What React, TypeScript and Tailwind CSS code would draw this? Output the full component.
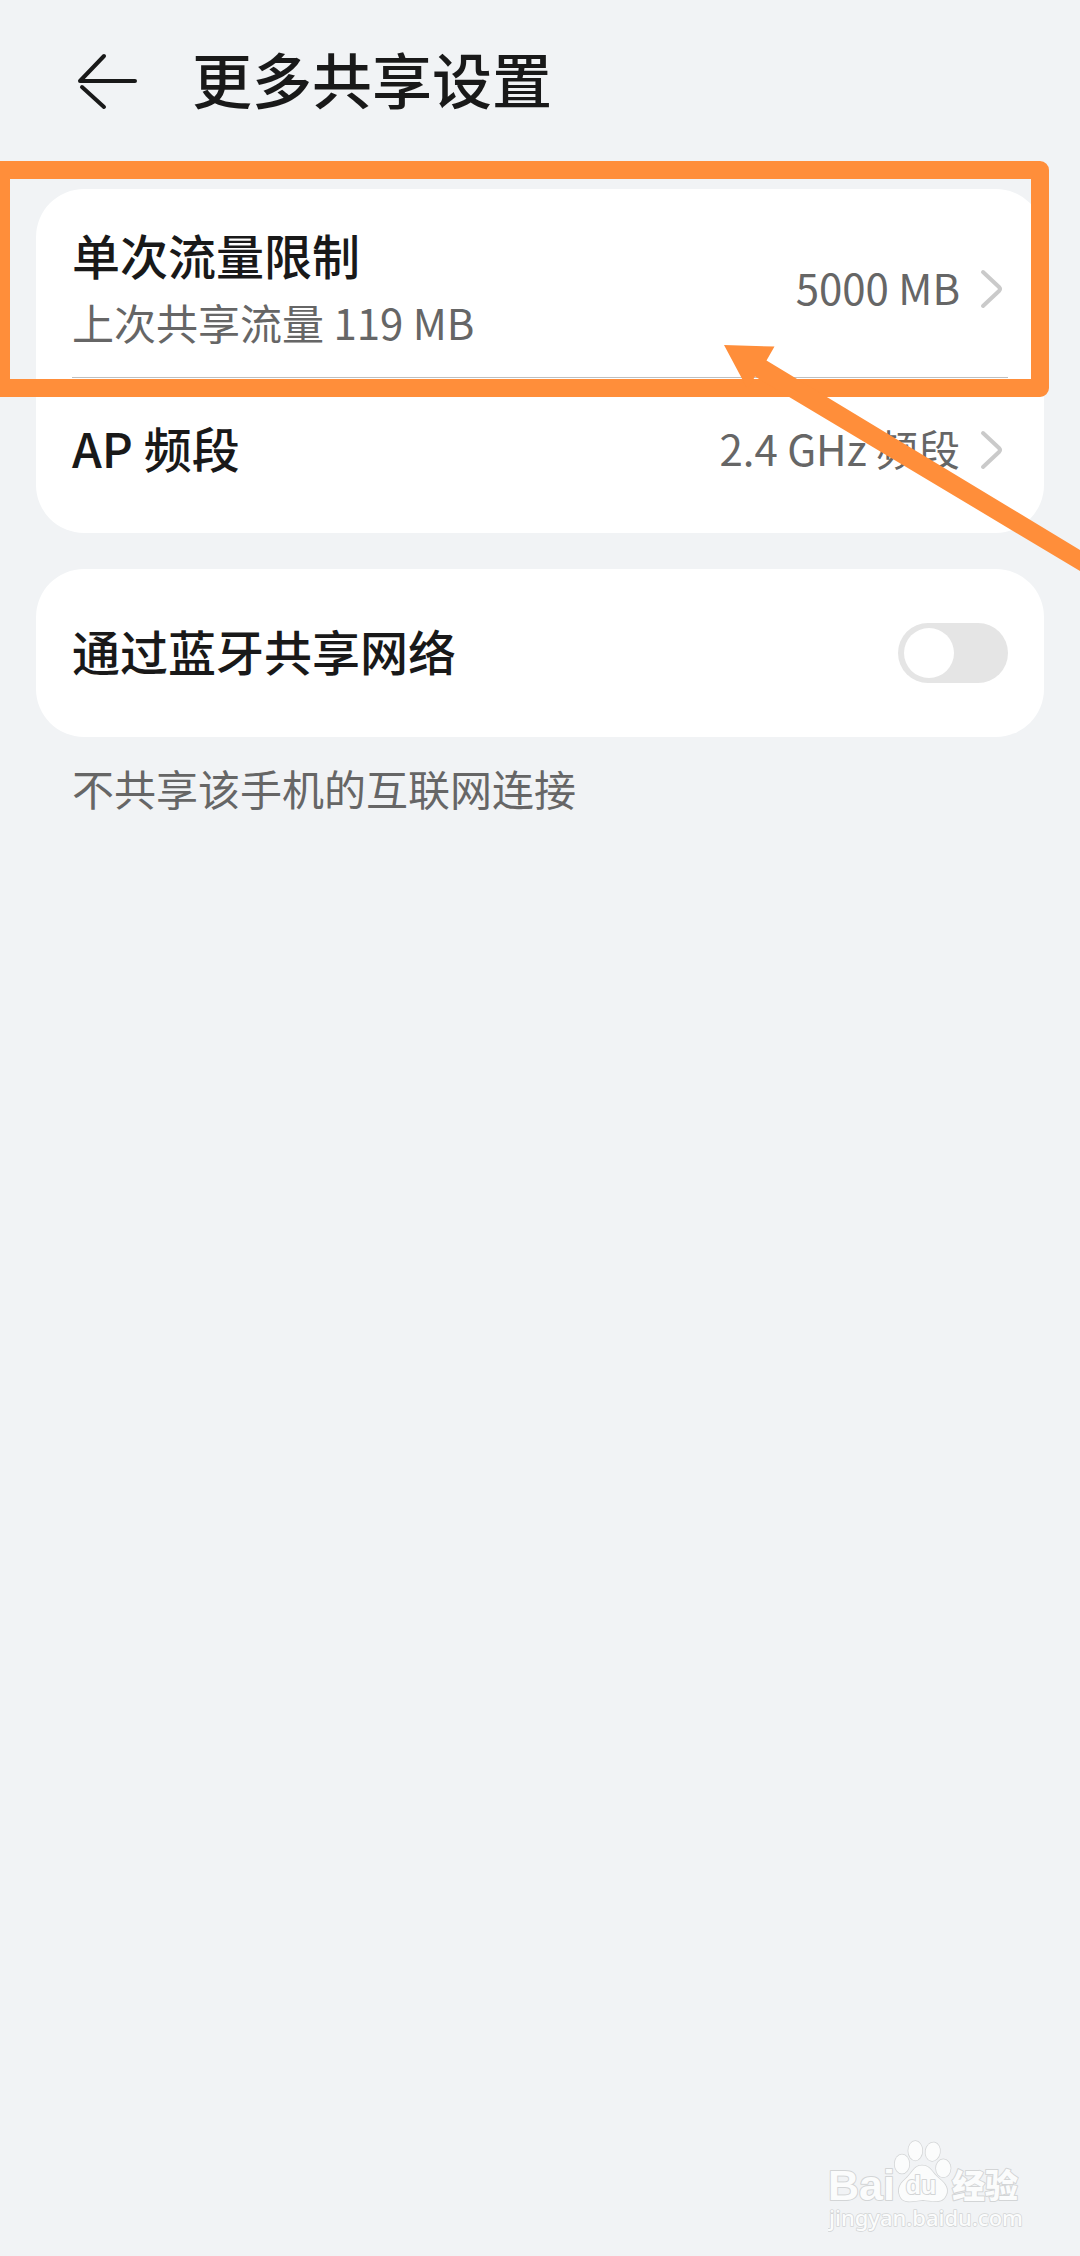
import { useState } from "react";

function BackIcon() {
  return (
    <svg width="72" height="72" viewBox="0 0 72 72" fill="none" stroke="#191919" strokeWidth="4" strokeLinecap="round" strokeLinejoin="round" aria-hidden="true">
      <path d="M63 36H8L32 11" />
      <path d="M10 42L32 62" />
    </svg>
  );
}

function Chevron() {
  return (
    <svg width="24" height="44" viewBox="0 0 24 44" fill="none" stroke="#cacaca" strokeWidth="4" strokeLinecap="round" strokeLinejoin="round" aria-hidden="true" className="shrink-0">
      <path d="M3 5L19 20Q21 22 19 24L3 39" />
    </svg>
  );
}

function Pointer() {
  return (
    <svg width="356" height="228" viewBox="0 0 356 228" fill="#ff8e3a" aria-hidden="true" className="pointer-events-none absolute -right-9 top-[156px]">
      <path d="M0 0L50.500 1.500L42.500 15.500L356 205V226L31 31.500L23.500 44Z" />
    </svg>
  );
}

function Watermark() {
  return (
    <svg width="200" height="100" viewBox="0 0 200 100" role="img" aria-label="Baidu 经验" className="absolute bottom-[16px] right-[52px]" fill="#fbfcfc" stroke="#d3d5d6" strokeWidth="2" strokeLinejoin="round" paintOrder="stroke">
      <text x="0" y="60" fontFamily="Liberation Sans, Arial, sans-serif" fontWeight="700" fontSize="43">Bai</text>
      <g strokeWidth="1.500">
        <ellipse cx="74" cy="24" rx="7.300" ry="9.500" />
        <ellipse cx="87.300" cy="10.700" rx="7" ry="9.700" />
        <ellipse cx="104.700" cy="11.700" rx="7.200" ry="9.300" transform="rotate(10 105 12)" />
        <ellipse cx="115.300" cy="28.300" rx="7.300" ry="9" />
        <path d="M94 25.500C103 25.500 104 33 111 38.500C119 44.500 121 51 117 57C113 63.500 104 61 95 60C86 61 77 63.500 73 58C69 51 71 44.500 77 39.500C84 33.500 86 25.500 94 25.500Z" />
      </g>
      <text x="93" y="54" textAnchor="middle" fontFamily="Liberation Sans, Arial, sans-serif" fontWeight="700" fontSize="25">du</text>
      <text x="124" y="58" fontFamily="Noto Sans CJK SC, sans-serif" fontWeight="900" fontSize="33">经验</text>
      <text x="1" y="86" fontFamily="Noto Sans, sans-serif" fontWeight="500" fontSize="22" strokeWidth="1.500">jingyan.baidu.com</text>
    </svg>
  );
}

export default function App() {
  const [bluetooth, setBluetooth] = useState(false);
  return (
    <div lang="zh-CN" className="relative min-h-screen overflow-hidden bg-[#f1f3f5] font-['Noto_Sans_CJK_SC',sans-serif] text-[#191919]">
      <header className="flex h-[162px] items-center gap-[48px] pl-[72px]">
        <button type="button" aria-label="返回">
          <BackIcon />
        </button>
        <h1 className="pb-1.5 text-[60px] leading-[80px] font-medium">更多共享设置</h1>
      </header>

      <main className="flex flex-col gap-9 px-9 pt-[27px]">
        <section className="relative rounded-[48px] bg-white px-9 py-3">
          <button type="button" className="flex h-[177px] w-full items-center justify-between border-b border-[#bfbfbf] text-left">
            <span className="flex flex-col pb-1.5">
              <span className="text-[48px] leading-[72px] font-medium">单次流量限制</span>
              <span className="text-[42px] leading-[64px] text-[#666666]">上次共享流量 119 MB</span>
            </span>
            <span className="flex items-center gap-[20px] pr-1">
              <span className="pb-1 text-[42px] leading-[64px] text-[#666666]">5000 MB</span>
              <Chevron />
            </span>
          </button>
          <button type="button" className="flex h-[143px] w-full items-center justify-between text-left">
            <span className="pb-1.5 text-[48px] leading-[72px] font-medium">AP 频段</span>
            <span className="flex items-center gap-[20px] pr-1">
              <span className="pb-1 text-[42px] leading-[64px] text-[#666666]">2.4 GHz 频段</span>
              <Chevron />
            </span>
          </button>
          <div className="pointer-events-none absolute -left-9 -right-[5px] -top-[28px] h-[236px] rounded-r-[9px] border-[18px] border-l-[10px] border-[#ff8e3a]" />
          <Pointer />
        </section>

        <section className="rounded-[48px] bg-white px-9 py-3">
          <label className="flex h-[144px] items-center justify-between">
            <span className="pb-1.5 text-[48px] leading-[72px] font-medium">通过蓝牙共享网络</span>
            <input
              type="checkbox"
              role="switch"
              checked={bluetooth}
              onChange={(e) => setBluetooth(e.target.checked)}
              className="flex h-[60px] w-[110px] appearance-none items-center rounded-full bg-[#e5e5e5] px-[6px] before:size-[50px] before:rounded-full before:bg-white checked:justify-end checked:bg-[#0a59f7]"
            />
          </label>
        </section>
        <p className="-mt-4 px-9 text-[42px] leading-[62px] text-[#666666]">不共享该手机的互联网连接</p>
      </main>

      <Watermark />
    </div>
  );
}
